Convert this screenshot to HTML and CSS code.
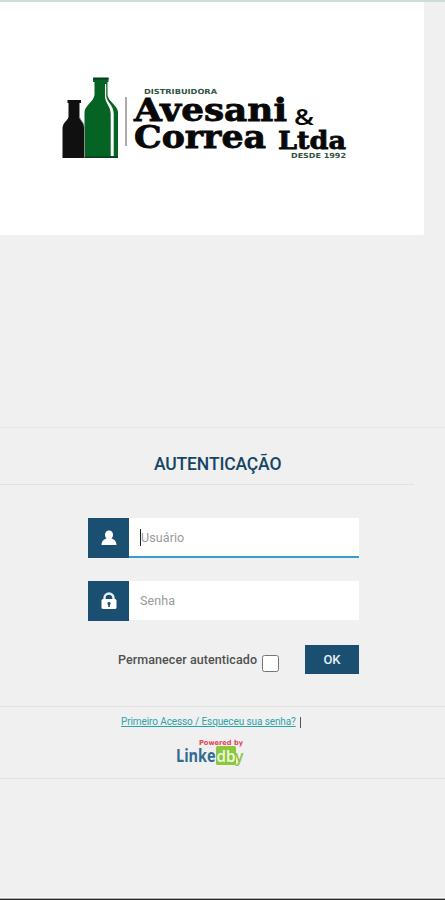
FILE: index.html
```html
<!DOCTYPE html>
<html lang="pt-BR">
<head>
<meta charset="utf-8">
<title>Autenticação</title>
<link rel="stylesheet" href="styles.css">
</head>
<body>
<header class="brand">
<svg class="logo" width="300" height="90" viewBox="55 72 300 90">
<path fill="#101010" d="M67.500 100h13.500v3h-1.500v14c1 4 4.500 5 5 11v30H62.500v-30c.5-6 5-7 6-11v-14h-1z"/>
<path fill="#056423" d="M93 78h15.500v4h-1v13c1 7 10 10 10.500 17v46H84.500v-46c.5-7 9-10 10-17V82H93z"/>
<path fill="#063e18" d="M93 77.500h15.500v2H93zM85 156.500h33v1.500H85z"/>
<path fill="none" stroke="#8c8c8c" stroke-width="1" d="M79.500 103v14c1 4 4.500 5 5 11v29"/>
<path fill="#fff" d="M105 84h1.200v12c1 7 7.500 9 7.500 18v42h-3v-42c0-8-5.700-11-5.700-18z"/>
<path stroke="#b0a8b0" stroke-width="2" d="M126 97v49"/>
<g class="logo-sub">
<text x="144" y="94" textLength="73" lengthAdjust="spacingAndGlyphs">DISTRIBUIDORA</text>
<text x="291" y="157.500" textLength="55" lengthAdjust="spacingAndGlyphs">DESDE 1992</text>
</g>
<g class="logo-name">
<text x="134" y="121" font-size="31" textLength="153" lengthAdjust="spacingAndGlyphs">Avesani</text>
<text x="134" y="148" font-size="31" textLength="132" lengthAdjust="spacingAndGlyphs">Correa</text>
<text x="278" y="148.500" font-size="25" textLength="68" lengthAdjust="spacingAndGlyphs">Ltda</text>
<text class="amp" x="294" y="125" font-size="22" textLength="20" lengthAdjust="spacingAndGlyphs">&amp;</text>
</g>
</svg>
</header>
<main class="login">
<h1 class="title">AUTENTICAÇÃO</h1>
<form class="form">
<label class="field focused">
<span class="tile"><svg width="16" height="16" viewBox="0 0 16 16"><path fill="#fff" d="M8 .5c2.500 0 4 1.700 4 4.200 0 1.700-.7 3-1.700 3.900 2.700.8 5 2.100 5.200 6.400H.5c.2-4.300 2.500-5.600 5.200-6.400C4.700 7.700 4 6.400 4 4.700 4 2.200 5.500.5 8 .5z"/></svg></span>
<span class="input"><span class="caret"></span>Usuário</span>
</label>
<label class="field">
<span class="tile"><svg width="16" height="18" viewBox="0 0 16 18"><path fill="none" stroke="#e4f3fa" stroke-width="2.400" d="M3.500 8V6a4.500 4.500 0 0 1 9 0v2"/><rect x=".5" y="7" width="15" height="10" rx="1.500" fill="#fff"/><path fill="#1b4f72" d="M8 10a1.600 1.600 0 0 1 .8 3v2H7.200v-2A1.600 1.600 0 0 1 8 10z"/></svg></span>
<span class="input">Senha</span>
</label>
<div class="actions">
<label class="remember"><span>Permanecer autenticado</span><input class="check" type="checkbox"></label>
<button class="ok" type="button">OK</button>
</div>
</form>
<footer class="links">
<div class="help"><a class="link" href="#">Primeiro Acesso / Esqueceu sua senha?</a><span class="bar"></span></div>
<svg class="powered" width="72" height="34" viewBox="0 -2 72 34">
<rect x="41" y="10" width="20" height="19" rx="1.500" fill="#8cc63f"/>
<text class="pw" x="24" y="8.500" textLength="44" lengthAdjust="spacingAndGlyphs">Powered by</text>
<text class="lk" x="1" y="25.500" textLength="39.500" lengthAdjust="spacingAndGlyphs">Linke</text>
<text class="db" x="41.500" y="25.500" textLength="19" lengthAdjust="spacingAndGlyphs">db</text>
<text class="y" x="60" y="25.500" textLength="8.500" lengthAdjust="spacingAndGlyphs">y</text>
</svg>
</footer>
</main>
<div class="base"></div>
</body>
</html>
```
FILE: styles.css
```css
* { box-sizing: border-box; }
body {
  margin: 0;
  height: 900px;
  overflow: hidden;
  display: flex;
  flex-direction: column;
  background: #f0f0f0;
  border-top: 2px solid #cbdcda;
  font-family: Roboto, sans-serif;
}
.brand {
  width: 424px;
  height: 233px;
  padding: 70px 0 0 55px;
  background: #fff;
  border-radius: 0 0 2px 0;
}
.logo { display: block; }
.logo-name { font-family: "DejaVu Serif", serif; font-weight: 700; fill: #080808; stroke: #080808; stroke-width: .8; }
.amp { font-family: "Open Sans", sans-serif; font-weight: 600; stroke: none; }
.logo-sub { font: 700 7px "DejaVu Sans", sans-serif; fill: #31543e; }
.login {
  margin-top: 192px;
  height: 352px;
  border-top: 1px solid #e4e4e4;
  border-bottom: 1px solid #e2e2e2;
}
.title {
  margin: 0;
  width: 414px;
  height: 57px;
  padding: 25px 0 0 154px;
  border-bottom: 1px solid #e2e2e2;
  color: #164564;
  font-size: 17.500px;
  font-weight: 500;
  line-height: 22px;
  letter-spacing: -.15px;
}
.form { width: 271px; margin: 33px 0 0 88px; }
.field { display: flex; height: 40px; margin-bottom: 23px; }
.tile {
  width: 41px;
  height: 40px;
  display: flex;
  align-items: center;
  justify-content: center;
  background: #1b4f72;
}
.input {
  flex: 1;
  height: 39px;
  display: flex;
  align-items: center;
  padding-left: 11px;
  background: #fff;
  color: #999;
  font-size: 12.500px;
  letter-spacing: .1px;
}
.focused .input { height: 40px; border-bottom: 2px solid #3b9bcb; }
.caret { width: 1px; height: 17px; background: #222; }
.actions { display: flex; justify-content: space-between; height: 29px; margin-top: 24px; padding-left: 30px; }
.remember { display: flex; align-items: center; color: #505050; font-size: 12.500px; font-weight: 500; letter-spacing: .08px; }
.check { width: 17px; height: 17px; margin: 8px 0 0 5px; }
.ok { width: 54px; height: 29px; padding: 0; border: 0; background: #1b4f72; color: #e5f0f5; font: 500 13px Roboto, sans-serif; }
.links {
  height: 72px;
  margin-top: 32px;
  padding-top: 9px;
  border-top: 1px solid #e2e2e2;
}
.help { display: flex; align-items: center; height: 12px; margin-left: 121px; }
.link { color: #2aa5a5; font-size: 10px; line-height: 12px; letter-spacing: -.1px; white-space: nowrap; }
.bar { width: 1px; height: 11px; margin-left: 4px; background: #555; }
.powered { display: block; margin: 6px 0 0 175px; }
.pw { font: 700 7px "DejaVu Sans", sans-serif; fill: #e14655; }
.lk { font: 700 17px "Open Sans", sans-serif; fill: #306b91; }
.db { font: 600 16px "Open Sans", sans-serif; fill: #effbdc; }
.y { font: 600 16px "Open Sans", sans-serif; fill: #8cc63f; }
.base { height: 3px; margin-top: auto; background: linear-gradient(#fafafa 1px, #aaa 1px 2px, #282629 2px); }
```
